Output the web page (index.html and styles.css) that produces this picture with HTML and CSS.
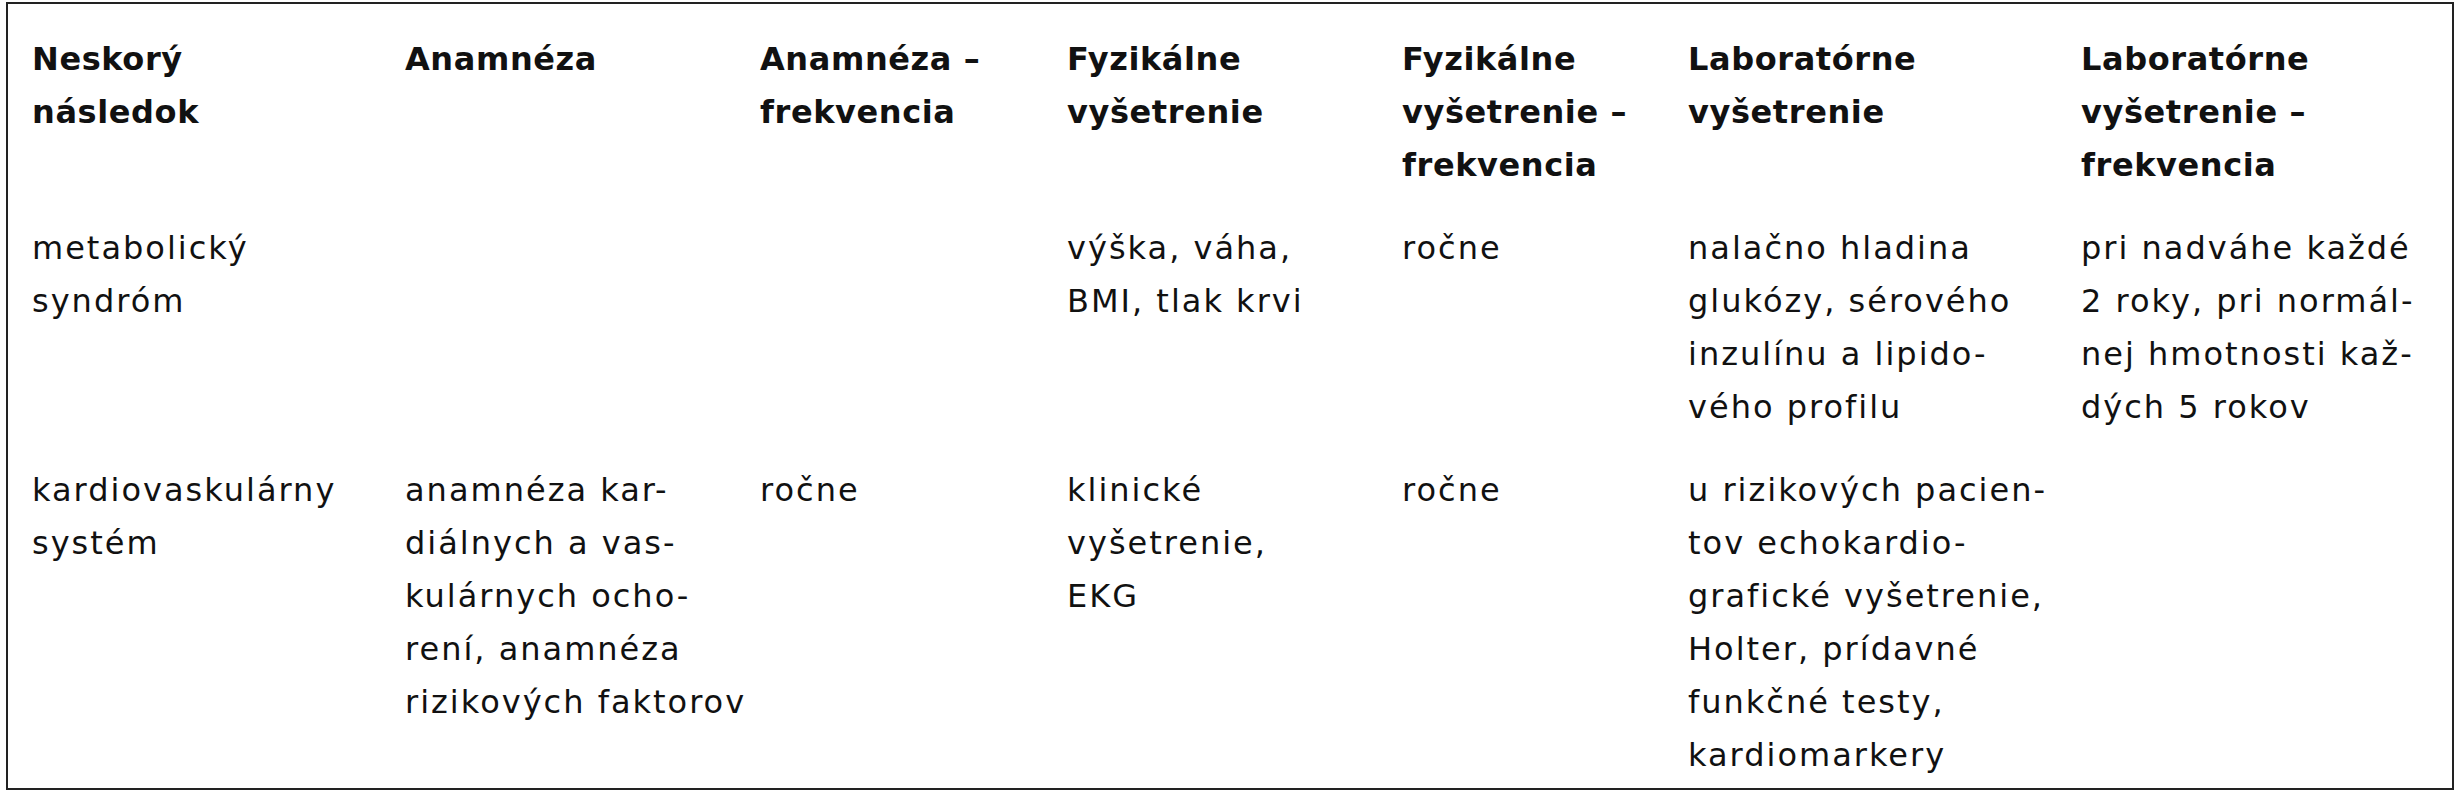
FILE: index.html
```html
<!DOCTYPE html>
<html lang="sk">
<head>
<meta charset="utf-8">
<title>Neskoré následky</title>
<link rel="stylesheet" href="styles.css">
</head>
<body>
<div class="table">
  <div class="cell th">Neskorý<br>následok</div>
  <div class="cell th">Anamnéza</div>
  <div class="cell th">Anamnéza –<br>frekvencia</div>
  <div class="cell th">Fyzikálne<br>vyšetrenie</div>
  <div class="cell th">Fyzikálne<br>vyšetrenie –<br>frekvencia</div>
  <div class="cell th">Laboratórne<br>vyšetrenie</div>
  <div class="cell th">Laboratórne<br>vyšetrenie –<br>frekvencia</div>

  <div class="cell">metabolický<br>syndróm</div>
  <div class="cell"></div>
  <div class="cell"></div>
  <div class="cell">výška, váha,<br>BMI, tlak krvi</div>
  <div class="cell">ročne</div>
  <div class="cell">nalačno hladina<br>glukózy, sérového<br>inzulínu a lipido-<br>vého profilu</div>
  <div class="cell">pri nadváhe každé<br>2 roky, pri normál-<br>nej hmotnosti kaž-<br>dých 5 rokov</div>

  <div class="cell">kardiovaskulárny<br>systém</div>
  <div class="cell">anamnéza kar-<br>diálnych a vas-<br>kulárnych ocho-<br>rení, anamnéza<br>rizikových faktorov</div>
  <div class="cell">ročne</div>
  <div class="cell">klinické<br>vyšetrenie,<br>EKG</div>
  <div class="cell">ročne</div>
  <div class="cell">u rizikových pacien-<br>tov echokardio-<br>grafické vyšetrenie,<br>Holter, prídavné<br>funkčné testy,<br>kardiomarkery</div>
  <div class="cell"></div>
</div>
</body>
</html>
```

FILE: styles.css
```css
html, body {
  margin: 0;
  padding: 0;
  background: #ffffff;
}

body {
  padding: 2px 0 0 6px;
  font-family: "DejaVu Sans", "Liberation Sans", sans-serif;
  color: #111111;
}

.table {
  box-sizing: border-box;
  width: 2448px;
  height: 788px;
  border: 2px solid #222222;
  padding: 29px 0 0 24px;
  display: grid;
  grid-template-columns: 373px 355px 307px 335px 286px 393px 1fr;
  grid-auto-rows: min-content;
  row-gap: 30px;
  align-content: start;
}

.cell {
  font-size: 32px;
  line-height: 53px;
  letter-spacing: 2px;
  white-space: nowrap;
}

.th {
  font-weight: bold;
  letter-spacing: 0.6px;
}
```
